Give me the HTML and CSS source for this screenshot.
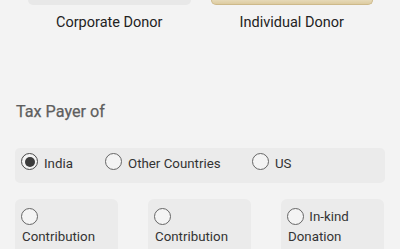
FILE: index.html
```html
<!DOCTYPE html>
<html>
<head>
<meta charset="utf-8">
<link rel="stylesheet" href="styles.css">
</head>
<body>
<div class="donor-row">
  <div class="donor">
    <div class="donor-card"></div>
    <div class="donor-label">Corporate Donor</div>
  </div>
  <div class="donor">
    <div class="donor-card selected"></div>
    <div class="donor-label">Individual Donor</div>
  </div>
</div>

<div class="section-title">Tax Payer of</div>

<div class="radio-row">
  <label class="radio-item item-india"><span class="radio checked"></span><span>India</span></label>
  <label class="radio-item item-other"><span class="radio"></span><span>Other Countries</span></label>
  <label class="radio-item"><span class="radio"></span><span>US</span></label>
</div>

<div class="cards">
  <div class="card"><span class="radio inline"></span> Contribution</div>
  <div class="card"><span class="radio inline"></span> Contribution</div>
  <div class="card"><span class="radio inline"></span> In-kind Donation</div>
</div>
</body>
</html>
```
FILE: styles.css
```css
html, body {
  margin: 0;
  padding: 0;
}
body {
  background: #f3f3f3;
  font-family: Roboto, "Liberation Sans", sans-serif;
  color: #222;
  width: 400px;
  height: 249px;
  overflow: hidden;
}
.donor-row {
  display: flex;
  gap: 20px;
  padding: 0 27px 0 28px;
}
.donor {
  flex: 1;
  display: flex;
  flex-direction: column;
}
.donor-card {
  height: 5px;
  background: #e8e8e8;
  border-radius: 0 0 6px 6px;
}
.donor-card.selected {
  background: linear-gradient(#e6d9b8, #ddcba0);
  border: 1px solid #cdb98a;
  border-top: none;
  height: 4px;
}
.donor-label {
  margin-top: 9px;
  text-align: center;
  font-size: 14.5px;
  line-height: 17px;
  color: #222;
}
.section-title {
  margin-top: 71px;
  padding-left: 16px;
  font-size: 16.2px;
  line-height: 20px;
  color: #5e5e5e;
  -webkit-text-stroke: 0.25px #5e5e5e;
}
.radio-row {
  margin: 26px 15px 0 15px;
  height: 35px;
  box-sizing: border-box;
  background: #ebebeb;
  border-radius: 5px;
  display: flex;
  align-items: flex-start;
  padding: 5px 0 0 6px;
}
.radio-item {
  display: flex;
  align-items: center;
  gap: 6px;
  font-size: 13.3px;
  line-height: 17px;
  color: #333;
}
.item-india {
  flex: 0 0 84px;
}
.item-other {
  flex: 0 0 147px;
}
.radio-item span:last-child {
  position: relative;
  top: 2px;
}
.radio {
  width: 17px;
  height: 17px;
  border: 1.3px solid #666;
  border-radius: 50%;
  box-sizing: border-box;
  display: inline-flex;
  align-items: center;
  justify-content: center;
  background: #f4f4f4;
  flex: none;
}
.radio.checked {
  border-color: #4a4a4a;
}
.radio.checked::after {
  content: "";
  width: 10px;
  height: 10px;
  border-radius: 50%;
  background: #3c3c3c;
}
.cards {
  margin: 16px 15px 0 15px;
  display: grid;
  grid-template-columns: 103px 103px 103px;
  column-gap: 30px;
}
.card {
  background: #ebebeb;
  border-radius: 6px;
  padding: 8px 6px 0 7px;
  font-size: 13.3px;
  line-height: 20px;
  color: #333;
  height: 50px;
}
.radio.inline {
  vertical-align: -4px;
  margin-left: -1px;
  margin-right: 2px;
}
```
